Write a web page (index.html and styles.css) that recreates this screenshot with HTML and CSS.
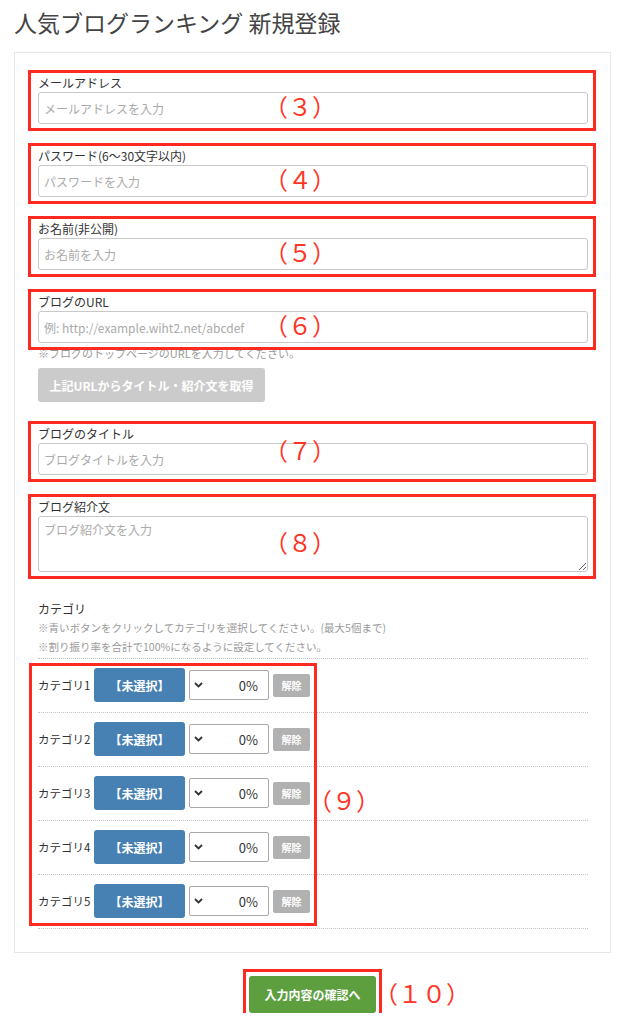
FILE: index.html
```html
<!DOCTYPE html>
<html lang="ja">

<head>
    <meta charset="UTF-8">
    <meta name="viewport" content="width=device-width, initial-scale=1.0">
    <title>人気ブログランキング 新規登録</title>
    <link rel="stylesheet" href="styles.css">
</head>

<body>
    <div class="page">
        <h1 class="title">人気ブログランキング 新規登録</h1>

        <form class="panel">
            <div class="field mark">
                <label for="email">メールアドレス</label>
                <input type="text" id="email" placeholder="メールアドレスを入力">
                <span class="num">（３）</span>
            </div>

            <div class="field mark">
                <label for="password">パスワード(6～30文字以内)</label>
                <input type="password" id="password" placeholder="パスワードを入力">
                <span class="num">（４）</span>
            </div>

            <div class="field mark">
                <label for="name">お名前(非公開)</label>
                <input type="text" id="name" placeholder="お名前を入力">
                <span class="num">（５）</span>
            </div>

            <div class="field field-url mark">
                <label for="url">ブログのURL</label>
                <input type="text" id="url" placeholder="例: http://example.wiht2.net/abcdef">
                <span class="num">（６）</span>
            </div>
            <p class="note">※ブログのトップページのURLを入力してください。</p>
            <button type="button" class="fetch-btn">上記URLからタイトル・紹介文を取得</button>

            <div class="field mark">
                <label for="blogTitle">ブログのタイトル</label>
                <input type="text" id="blogTitle" placeholder="ブログタイトルを入力">
                <span class="num num-up">（７）</span>
            </div>

            <div class="field field-desc mark">
                <label for="desc">ブログ紹介文</label>
                <textarea id="desc" placeholder="ブログ紹介文を入力"></textarea>
                <span class="num num-down">（８）</span>
            </div>

            <div class="category">
                <div class="cat-head">
                    <div class="cat-label">カテゴリ</div>
                    <p class="cat-note">※青いボタンをクリックしてカテゴリを選択してください。(最大5個まで)</p>
                    <p class="cat-note">※割り振り率を合計で100%になるように設定してください。</p>
                </div>
                <div class="rows">
                    <div class="row">
                        <span class="row-label">カテゴリ1</span>
                        <button type="button" class="pick-btn">【未選択】</button>
                        <div class="rate">
                            <svg class="chev" width="9" height="6" viewBox="0 0 9 6"><path d="M1 1 L4.5 4.5 L8 1" fill="none" stroke="#333" stroke-width="1.8"/></svg>
                            <span>0%</span>
                        </div>
                        <button type="button" class="clear-btn">解除</button>
                    </div>
                    <div class="row">
                        <span class="row-label">カテゴリ2</span>
                        <button type="button" class="pick-btn">【未選択】</button>
                        <div class="rate">
                            <svg class="chev" width="9" height="6" viewBox="0 0 9 6"><path d="M1 1 L4.5 4.5 L8 1" fill="none" stroke="#333" stroke-width="1.8"/></svg>
                            <span>0%</span>
                        </div>
                        <button type="button" class="clear-btn">解除</button>
                    </div>
                    <div class="row">
                        <span class="row-label">カテゴリ3</span>
                        <button type="button" class="pick-btn">【未選択】</button>
                        <div class="rate">
                            <svg class="chev" width="9" height="6" viewBox="0 0 9 6"><path d="M1 1 L4.5 4.5 L8 1" fill="none" stroke="#333" stroke-width="1.8"/></svg>
                            <span>0%</span>
                        </div>
                        <button type="button" class="clear-btn">解除</button>
                    </div>
                    <div class="row">
                        <span class="row-label">カテゴリ4</span>
                        <button type="button" class="pick-btn">【未選択】</button>
                        <div class="rate">
                            <svg class="chev" width="9" height="6" viewBox="0 0 9 6"><path d="M1 1 L4.5 4.5 L8 1" fill="none" stroke="#333" stroke-width="1.8"/></svg>
                            <span>0%</span>
                        </div>
                        <button type="button" class="clear-btn">解除</button>
                    </div>
                    <div class="row">
                        <span class="row-label">カテゴリ5</span>
                        <button type="button" class="pick-btn">【未選択】</button>
                        <div class="rate">
                            <svg class="chev" width="9" height="6" viewBox="0 0 9 6"><path d="M1 1 L4.5 4.5 L8 1" fill="none" stroke="#333" stroke-width="1.8"/></svg>
                            <span>0%</span>
                        </div>
                        <button type="button" class="clear-btn">解除</button>
                    </div>
                    <span class="num num-rows">（９）</span>
                </div>
            </div>
        </form>

        <div class="submit-wrap">
            <div class="submit-box">
                <button type="button" class="submit-btn">入力内容の確認へ</button>
                <span class="num num-submit">（１０）</span>
            </div>
        </div>
    </div>
</body>

</html>
```

FILE: styles.css
```css
body{
    margin: 0;
    background-color: #fff;
    color: #333;
    font-family: "Noto Sans CJK JP", "Noto Sans", sans-serif;
}
.page{
    padding: 0 16px 0 14px;
}
.title{
    font-size: 23px;
    font-weight: normal;
    line-height: 30px;
    color: #444;
    margin: 7px 0 15px;
}
.panel{
    border: 1px solid #e6e6e6;
    padding: 21px 22px 23px 23px;
}

/* form fields */
.field{
    position: relative;
    margin-bottom: 23px;
}
.field label{
    display: block;
    font-size: 12px;
    line-height: 18px;
}
.field input,
.field textarea{
    display: block;
    width: 100%;
    box-sizing: border-box;
    height: 32px;
    border: 1px solid #c8c8c8;
    border-radius: 3px;
    padding: 0 5px;
    font-size: 12px;
    font-family: inherit;
    color: #333;
    margin: 0;
}
.field textarea{
    height: 56px;
    padding: 4px 5px;
    resize: vertical;
}
.field input::placeholder,
.field textarea::placeholder{
    color: #aaa;
}
.field-url{
    margin-bottom: 0;
}
.field-desc{
    margin-bottom: 23px;
}
.note{
    font-size: 11px;
    line-height: 16px;
    color: #999;
    margin: 2px 0 0;
}
.fetch-btn{
    display: block;
    width: 227px;
    height: 34px;
    margin: 7px 0 23px;
    border: none;
    border-radius: 3px;
    background-color: #cbcbcb;
    color: #fff;
    font-family: inherit;
    font-size: 12px;
    font-weight: bold;
}

/* category */
.category{
    padding-top: 5px;
}
.cat-head{
    border-bottom: 1px dotted #c4c4c4;
    padding-bottom: 2px;
}
.cat-label{
    font-size: 12px;
    line-height: 18px;
}
.cat-note{
    font-size: 10.5px;
    line-height: 19px;
    color: #999;
    margin: 0;
}
.rows{
    position: relative;
}
.row{
    display: flex;
    align-items: center;
    gap: 4px;
    padding: 9px 0 10px;
    border-bottom: 1px dotted #c4c4c4;
}
.row-label{
    width: 52px;
    font-size: 11.5px;
    white-space: nowrap;
}
.pick-btn{
    width: 91px;
    height: 34px;
    border: none;
    border-radius: 3px;
    background-color: #4781b3;
    color: #fff;
    font-family: inherit;
    font-size: 12px;
    font-weight: bold;
}
.rate{
    width: 80px;
    height: 30px;
    box-sizing: border-box;
    border: 1px solid #a9a9a9;
    border-radius: 2px;
    display: flex;
    align-items: center;
    justify-content: space-between;
    padding: 0 10px 0 4px;
    font-size: 13px;
}
.chev{
    display: block;
}
.clear-btn{
    width: 37px;
    height: 23px;
    border: none;
    border-radius: 2px;
    background-color: #b1b1b1;
    color: #fff;
    font-family: inherit;
    font-size: 10px;
    font-weight: bold;
    padding: 0;
}

/* submit */
.submit-wrap{
    display: flex;
    justify-content: center;
    margin-top: 23px;
}
.submit-box{
    position: relative;
}
.submit-btn{
    display: block;
    width: 127px;
    height: 37px;
    border: none;
    border-radius: 3px;
    background-color: #5d9f3f;
    color: #fff;
    font-family: inherit;
    font-size: 12px;
    font-weight: bold;
}

/* red annotation boxes and numbers */
.mark::after,
.rows::after,
.submit-box::after{
    content: "";
    position: absolute;
    border: 3px solid #ff2a1f;
    pointer-events: none;
}
.mark::after{
    top: -4px;
    left: -10px;
    right: -8px;
    bottom: -7px;
}
.rows::after{
    top: 4px;
    left: -9px;
    width: 288px;
    box-sizing: border-box;
    bottom: 3px;
}
.submit-box::after{
    top: -7px;
    left: -6px;
    right: -6px;
    bottom: -6px;
}
.num{
    position: absolute;
    left: 226px;
    top: 20px;
    font-size: 24px;
    line-height: 24px;
    color: #ff3526;
    white-space: nowrap;
}
.num-up{
    top: 13px;
}
.num-down{
    top: 32px;
}
.num-rows{
    left: 270px;
    top: 129px;
}
.num-submit{
    left: 125px;
    top: 5px;
}
```
